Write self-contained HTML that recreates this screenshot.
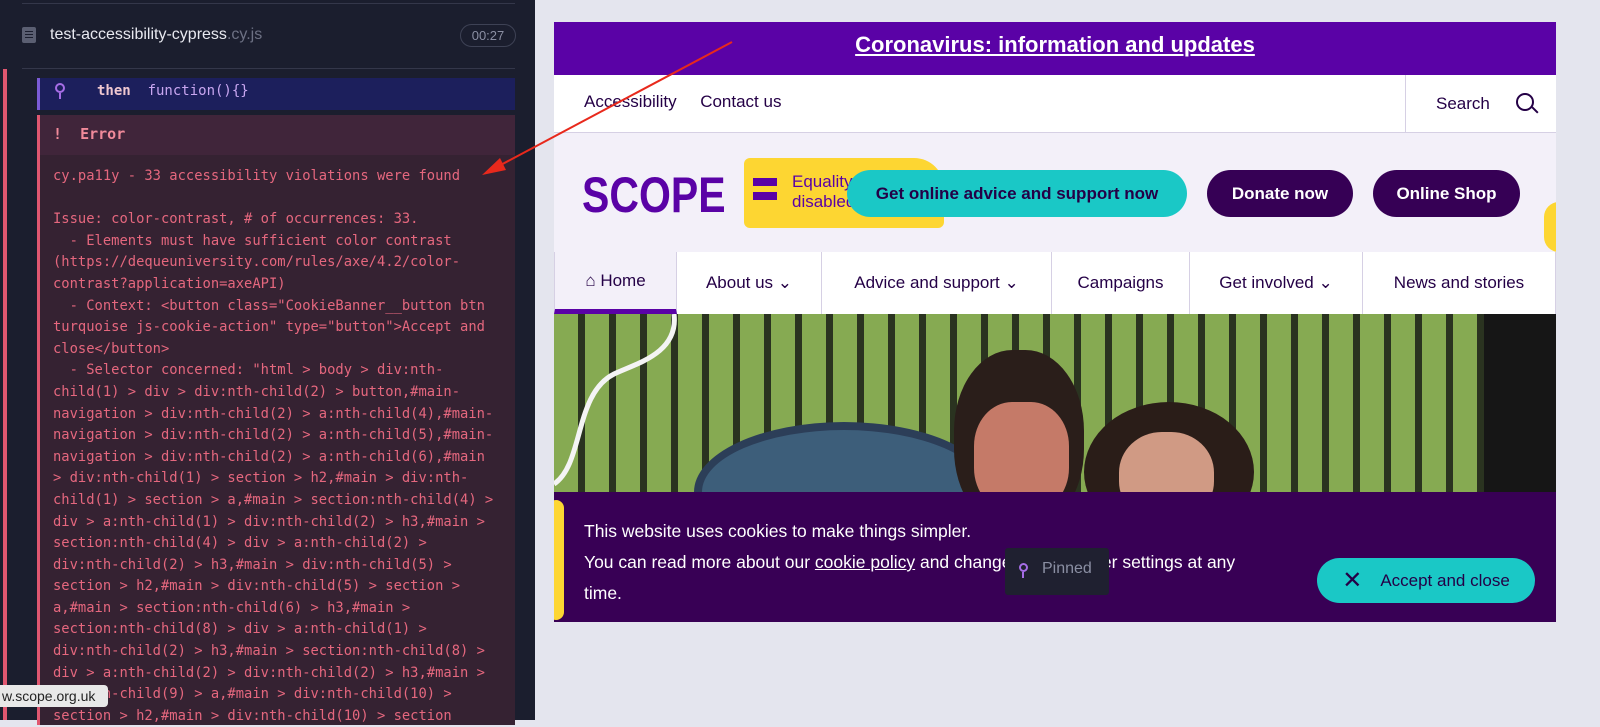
<!DOCTYPE html>
<html><head><meta charset="utf-8"><style>
*{margin:0;padding:0;box-sizing:border-box}
body{width:1600px;height:720px;overflow:hidden;background:#e4e5ee;font-family:"Liberation Sans",sans-serif;position:relative}
#left{position:absolute;left:0;top:0;width:535px;height:720px;background:#1b1e2e}
.mono{font-family:"DejaVu Sans Mono","Liberation Mono",monospace}
#err{position:absolute;left:37px;top:115px;width:478px;height:610px;background:#352232;border-left:3px solid #e05770}
#err pre{position:absolute;left:13px;top:51px;font-size:13.8px;line-height:21.6px;color:#e5677e;white-space:pre}
#site{position:absolute;left:554px;top:22px;width:1002px;height:600px;background:#f3f0f9;overflow:hidden}
.btn{position:absolute;border-radius:24px;font-size:17px;font-weight:bold;display:flex;align-items:center;justify-content:center}
.nav{position:absolute;top:230px;height:62px;background:#fff;border-right:1px solid #d6d0e4;display:flex;align-items:center;justify-content:center;font-size:17px;color:#240046}
</style></head><body>
<div id="left">
 <div style="position:absolute;left:22px;top:3px;width:493px;height:1px;background:#34374a"></div>
 <div style="position:absolute;left:22px;top:27px;width:14px;height:16px;border-radius:2px;background:#5b5f72"></div>
 <div style="position:absolute;left:25px;top:31px;width:8px;height:1px;background:#1b1e2e;box-shadow:0 3px 0 #1b1e2e,0 6px 0 #1b1e2e"></div>
 <div style="position:absolute;left:50px;top:26px;font-size:16px;color:#e8e9f0">test-accessibility-cypress<span style="color:#6d7184">.cy.js</span></div>
 <div style="position:absolute;left:460px;top:24px;width:56px;height:23px;border:1px solid #3e4255;border-radius:12px;color:#8b8fa3;font-size:13px;text-align:center;line-height:21px">00:27</div>
 <div style="position:absolute;left:22px;top:68px;width:493px;height:1px;background:#34374a"></div>
 <div style="position:absolute;left:3px;top:69px;width:4px;height:651px;background:#e05770"></div>
 <div style="position:absolute;left:37px;top:78px;width:478px;height:32px;background:#1c1f5c;border-left:3px solid #7b5bd6"></div>
 <div style="position:absolute;left:55px;top:83px;width:10px;height:10px;border-radius:50%;border:2px solid #a66de6"></div>
 <div style="position:absolute;left:59px;top:93px;width:2px;height:6px;background:#a66de6"></div>
 <div class="mono" style="position:absolute;left:97px;top:83px;font-size:14px;color:#e8e9f0"><b style="color:#f0c8d0">then</b>&nbsp; <span style="color:#c8a6f0">function(){}</span></div>
 <div id="err">
  <div style="position:absolute;left:0;top:0;width:475px;height:40px;background:#40253a"></div>
  <div class="mono" style="position:absolute;left:13px;top:10px;font-size:15px;color:#f08a9a;font-weight:bold">!&nbsp; Error</div>
  <pre class="mono">cy.pa11y - 33 accessibility violations were found

Issue: color-contrast, # of occurrences: 33.
  - Elements must have sufficient color contrast
(https://dequeuniversity.com/rules/axe/4.2/color-
contrast?application=axeAPI)
  - Context: &lt;button class="CookieBanner__button btn
turquoise js-cookie-action" type="button"&gt;Accept and
close&lt;/button&gt;
  - Selector concerned: "html &gt; body &gt; div:nth-
child(1) &gt; div &gt; div:nth-child(2) &gt; button,#main-
navigation &gt; div:nth-child(2) &gt; a:nth-child(4),#main-
navigation &gt; div:nth-child(2) &gt; a:nth-child(5),#main-
navigation &gt; div:nth-child(2) &gt; a:nth-child(6),#main
&gt; div:nth-child(1) &gt; section &gt; h2,#main &gt; div:nth-
child(1) &gt; section &gt; a,#main &gt; section:nth-child(4) &gt;
div &gt; a:nth-child(1) &gt; div:nth-child(2) &gt; h3,#main &gt;
section:nth-child(4) &gt; div &gt; a:nth-child(2) &gt;
div:nth-child(2) &gt; h3,#main &gt; div:nth-child(5) &gt;
section &gt; h2,#main &gt; div:nth-child(5) &gt; section &gt;
a,#main &gt; section:nth-child(6) &gt; h3,#main &gt;
section:nth-child(8) &gt; div &gt; a:nth-child(1) &gt;
div:nth-child(2) &gt; h3,#main &gt; section:nth-child(8) &gt;
div &gt; a:nth-child(2) &gt; div:nth-child(2) &gt; h3,#main &gt;
div:nth-child(9) &gt; a,#main &gt; div:nth-child(10) &gt;
section &gt; h2,#main &gt; div:nth-child(10) &gt; section</pre>
 </div>
 <div style="position:absolute;left:0;top:685px;width:108px;height:22px;background:#e8e8e8;border-radius:0 4px 4px 0;font-size:14px;color:#222;line-height:22px;padding-left:2px">w.scope.org.uk</div>
</div>
<div id="site">
 <div style="position:absolute;left:0;top:0;width:1002px;height:53px;background:#5a02a6;color:#fff;font-size:22px;font-weight:bold;text-align:center;line-height:46px"><span style="text-decoration:underline">Coronavirus: information and updates</span></div>
 <div style="position:absolute;left:0;top:53px;width:1002px;height:58px;background:#fff;border-bottom:1px solid #d6d0e4"></div>
 <div style="position:absolute;left:30px;top:70px;font-size:17px;color:#240046">Accessibility &nbsp;&nbsp;&nbsp; Contact us</div>
 <div style="position:absolute;left:851px;top:53px;width:1px;height:58px;background:#d6d0e4"></div>
 <div style="position:absolute;left:882px;top:72px;font-size:17px;color:#240046">Search</div>
 <div style="position:absolute;left:962px;top:71px;width:18px;height:18px;border:2px solid #240046;border-radius:50%"></div>
 <div style="position:absolute;left:977px;top:87px;width:8px;height:2px;background:#240046;transform:rotate(45deg)"></div>
 <div style="position:absolute;left:28px;top:144px;font-size:50px;font-weight:bold;color:#5a02a6;transform:scaleX(0.82);transform-origin:left top">SCOPE</div>
 <div style="position:absolute;left:190px;top:136px;width:200px;height:70px;background:#fdd632;border-radius:6px 30px 6px 6px"></div>
 <div style="position:absolute;left:199px;top:156px;width:24px;height:8px;background:#5a02a6;box-shadow:0 14px 0 #5a02a6"></div>
 <div style="position:absolute;left:238px;top:150px;font-size:17px;color:#5a02a6;line-height:20px">Equality<br>disabled</div>
 <div class="btn" style="left:293px;top:148px;width:340px;height:47px;background:#1ac8c6;color:#240046">Get online advice and support now</div>
 <div class="btn" style="left:653px;top:148px;width:146px;height:47px;background:#360055;color:#fff">Donate now</div>
 <div class="btn" style="left:819px;top:148px;width:147px;height:47px;background:#360055;color:#fff">Online Shop</div>
 <div style="position:absolute;left:990px;top:180px;width:30px;height:50px;background:#fdd632;border-radius:15px"></div>
 <div class="nav" style="left:0;width:123px;background:#f3f0f9;border-left:1px solid #d6d0e4;border-bottom:5px solid #5a02a6">⌂ Home</div>
 <div class="nav" style="left:123px;width:145px">About us ⌄</div>
 <div class="nav" style="left:268px;width:230px">Advice and support ⌄</div>
 <div class="nav" style="left:498px;width:138px">Campaigns</div>
 <div class="nav" style="left:636px;width:173px">Get involved ⌄</div>
 <div class="nav" style="left:809px;width:193px">News and stories</div>
 <div style="position:absolute;left:0;top:292px;width:1002px;height:178px;background:repeating-linear-gradient(90deg,#86aa52 0 24px,#2a3320 24px 31px),#86aa52"></div>
 <svg style="position:absolute;left:0;top:292px" width="140" height="178"><path d="M120 0 C125 40 80 50 60 60 C20 80 30 150 0 170" stroke="#f4f4f4" stroke-width="5" fill="none"/></svg>
 <div style="position:absolute;left:140px;top:400px;width:300px;height:140px;border-radius:50%;background:#3d5e7a;border:8px solid #2c3e58"></div>
 <div style="position:absolute;left:400px;top:328px;width:130px;height:180px;border-radius:45%;background:#2a1e1a"></div>
 <div style="position:absolute;left:420px;top:380px;width:95px;height:110px;border-radius:40%;background:#c57a68"></div>
 <div style="position:absolute;left:530px;top:380px;width:170px;height:140px;border-radius:50%;background:#2a1d18"></div>
 <div style="position:absolute;left:565px;top:410px;width:95px;height:90px;border-radius:45%;background:#d09a84"></div>
 <div style="position:absolute;left:930px;top:292px;width:72px;height:178px;background:#161616"></div>
 <div style="position:absolute;left:0;top:470px;width:1002px;height:130px;background:#380055"></div>
 <div style="position:absolute;left:-6px;top:478px;width:16px;height:120px;background:#fdd632;border-radius:8px"></div>
 <div style="position:absolute;left:30px;top:494px;font-size:17.5px;color:#fff;line-height:31px">This website uses cookies to make things simpler.<br>You can read more about our <u>cookie policy</u> and change your browser settings at any<br>time.</div>
 <div style="position:absolute;left:451px;top:526px;width:104px;height:47px;background:#1f2030;border-radius:3px"></div>
 <div style="position:absolute;left:465px;top:541px;width:9px;height:9px;border:2px solid #a66de6;border-radius:50%"></div>
 <div style="position:absolute;left:468px;top:550px;width:2px;height:6px;background:#a66de6"></div>
 <div style="position:absolute;left:488px;top:538px;font-size:16px;color:#8b8fa3">Pinned</div>
 <div class="btn" style="left:763px;top:536px;width:218px;height:45px;background:#1ac8c6;color:#240046;font-weight:normal"><span style="font-size:24px;margin-right:18px">✕</span>Accept and close</div>
</div>
<svg style="position:absolute;left:0;top:0" width="1600" height="720"><line x1="732" y1="42" x2="495" y2="168" stroke="#e8291c" stroke-width="2"/><polygon points="482,175 500,158 506,170" fill="#e8291c"/></svg>
</body></html>
